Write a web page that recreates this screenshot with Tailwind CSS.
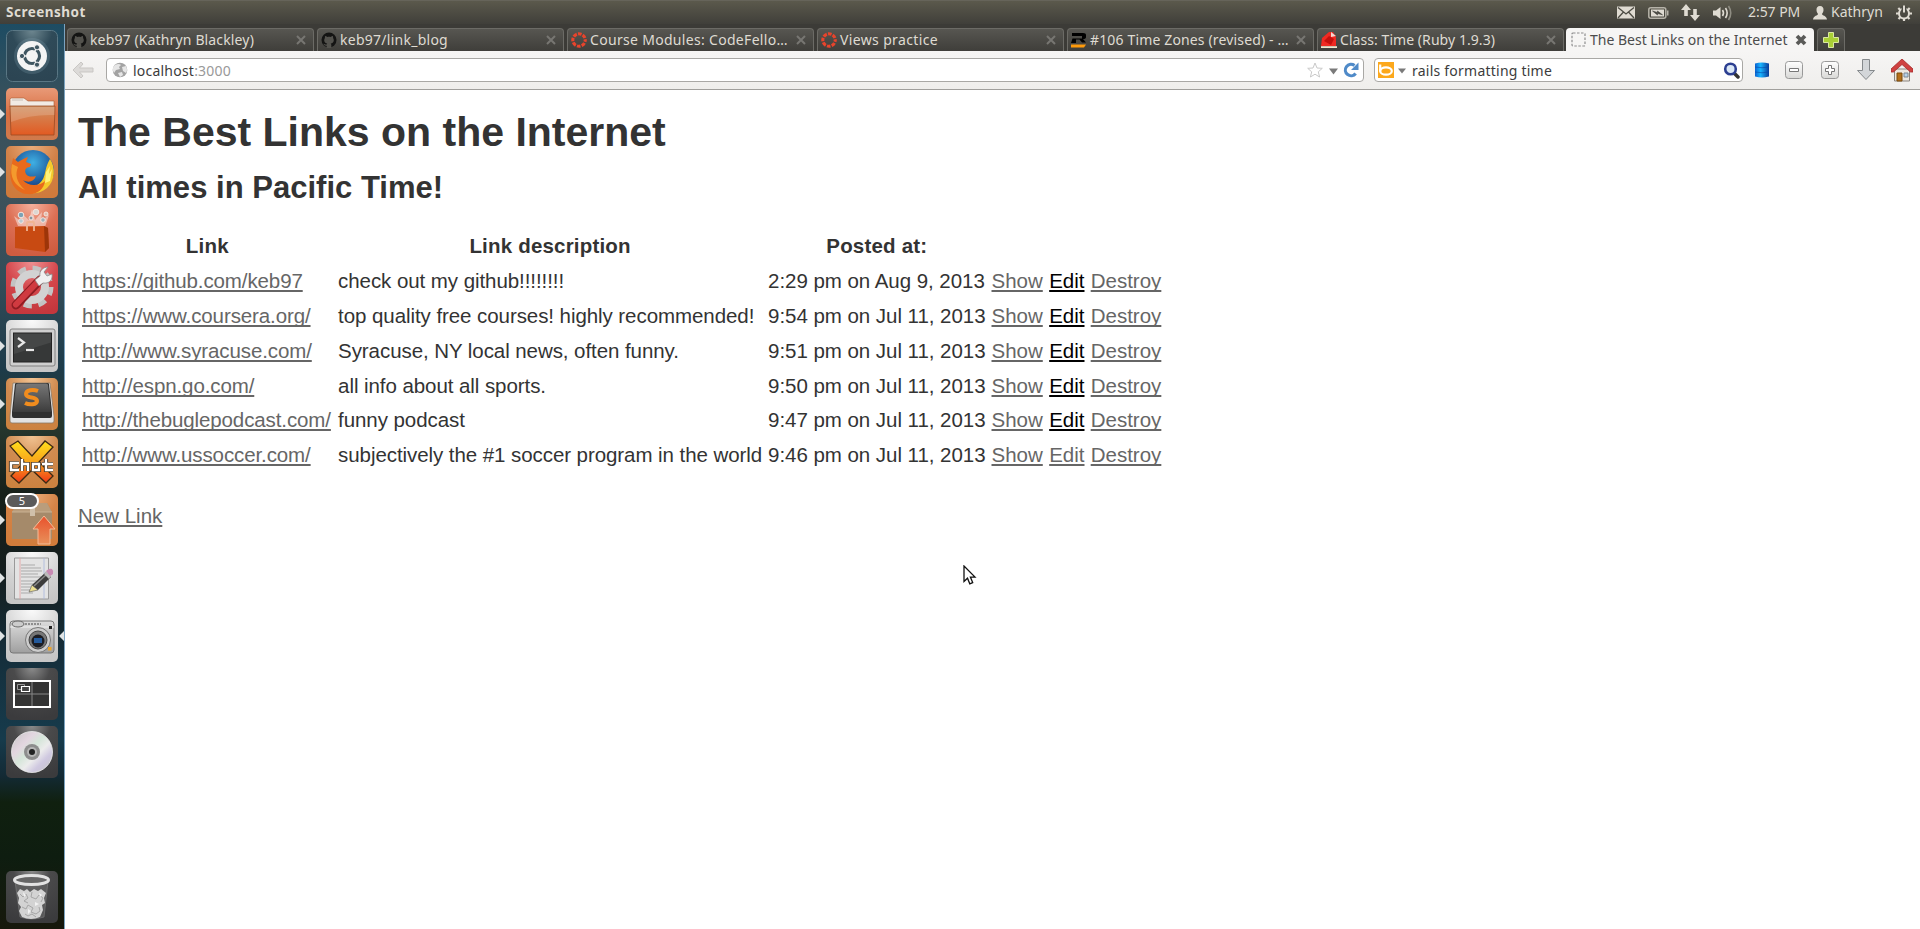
<!DOCTYPE html>
<html lang="en">
<head>
<meta charset="utf-8">
<title>The Best Links on the Internet</title>
<script src="https://cdn.jsdelivr.net/npm/@tailwindcss/browser@4"></script>
</head>
<body class="w-[1920px] h-[929px] overflow-hidden bg-white flex flex-col font-['Noto_Sans',sans-serif] text-[14px] leading-none">
<svg width="0" height="0" class="absolute">
<defs>
<linearGradient id="or" x1="0" y1="0" x2="0" y2="1"><stop offset="0" stop-color="#e89a78"/><stop offset=".5" stop-color="#d96f42"/><stop offset="1" stop-color="#cf7a4c"/></linearGradient>
<radialGradient id="tan" cx=".5" cy="0" r="1"><stop offset="0" stop-color="#f2c493"/><stop offset=".5" stop-color="#d08b50"/><stop offset="1" stop-color="#cc8240"/></radialGradient>
<radialGradient id="sal" cx=".5" cy="0" r="1"><stop offset="0" stop-color="#f4b09c"/><stop offset=".5" stop-color="#dc6f54"/><stop offset="1" stop-color="#cf5c40"/></radialGradient>
<radialGradient id="rd" cx=".5" cy="0" r="1"><stop offset="0" stop-color="#ee8f90"/><stop offset=".5" stop-color="#d4474c"/><stop offset="1" stop-color="#c4373d"/></radialGradient>
<radialGradient id="wh" cx=".5" cy="0" r="1"><stop offset="0" stop-color="#fafafa"/><stop offset=".6" stop-color="#d2d2d2"/><stop offset="1" stop-color="#c6c6c6"/></radialGradient>
<radialGradient id="dk" cx=".5" cy="0" r="1"><stop offset="0" stop-color="#8b8b8b"/><stop offset=".35" stop-color="#4a4a4b"/><stop offset="1" stop-color="#3b3b3d"/></radialGradient>
<radialGradient id="ub" cx=".5" cy="0" r="1"><stop offset="0" stop-color="#6e8790"/><stop offset=".4" stop-color="#2f4a58"/><stop offset="1" stop-color="#2c4553"/></radialGradient>
<linearGradient id="fold" x1="0" y1="0" x2="0" y2="1"><stop offset="0" stop-color="#cf9263"/><stop offset="1" stop-color="#e25a22"/></linearGradient>
<linearGradient id="xg" x1="0" y1="0" x2="0" y2="1"><stop offset="0" stop-color="#ffdf1c"/><stop offset=".5" stop-color="#f9a31c"/><stop offset="1" stop-color="#f03818"/></linearGradient>
<linearGradient id="key" x1="0" y1="0" x2="0" y2="1"><stop offset="0" stop-color="#777"/><stop offset="1" stop-color="#3c3c3c"/></linearGradient>
<linearGradient id="arr" x1="0" y1="0" x2="0" y2="1"><stop offset="0" stop-color="#e9512c"/><stop offset="1" stop-color="#e8905a"/></linearGradient>
<linearGradient id="disc" x1="0" y1="0" x2="1" y2="1"><stop offset="0" stop-color="#c4c4c4"/><stop offset=".3" stop-color="#e3d6e0"/><stop offset=".45" stop-color="#d6e6da"/><stop offset=".6" stop-color="#ececec"/><stop offset=".75" stop-color="#cfc8e0"/><stop offset="1" stop-color="#c4c4c4"/></linearGradient>
<linearGradient id="met" x1="0" y1="0" x2="0" y2="1"><stop offset="0" stop-color="#dcdcdc"/><stop offset="1" stop-color="#9f9f9f"/></linearGradient>
<linearGradient id="db" x1="0" y1="0" x2="1" y2="0"><stop offset="0" stop-color="#0b62d0"/><stop offset=".4" stop-color="#19b4ff"/><stop offset="1" stop-color="#0a3c9a"/></linearGradient>
<radialGradient id="ff" cx=".5" cy=".3" r=".6"><stop offset="0" stop-color="#3fb0e4"/><stop offset="1" stop-color="#153f86"/></radialGradient>
<linearGradient id="btn" x1="0" y1="0" x2="0" y2="1"><stop offset="0" stop-color="#fff"/><stop offset="1" stop-color="#d8d8d6"/></linearGradient>
<symbol id="tabx" viewBox="0 0 10 10"><path d="M1 1l8 8M9 1L1 9" stroke="#777672" stroke-width="2" fill="none"/></symbol>
<symbol id="gh" viewBox="0 0 17 17"><circle cx="8.5" cy="8.5" r="8" fill="#141413"/><path d="M6 17v-2.500c-2 .3-2.800-.6-3.400-2 1.200 0 1.500 1.200 3.500.8.100-.5.400-.8.600-1-2-.3-3.300-1.400-3.300-3.500 0-1 .3-1.700.8-2.300-.2-.8-.1-1.600.2-2.200.9 0 1.600.4 2.200.9 1.200-.3 2.600-.3 3.800 0 .6-.5 1.300-.9 2.200-.9.300.6.400 1.400.2 2.200.5.600.8 1.300.8 2.300 0 2.100-1.300 3.200-3.300 3.500.4.400.7 1 .7 1.700v3z" fill="#53524d"/></symbol>
<symbol id="canvas" viewBox="0 0 17 17"><circle cx="8.5" cy="8.5" r="6.6" fill="none" stroke="#e8442c" stroke-width="3.3" stroke-dasharray="3.9 1.284" stroke-dashoffset="1.9"/></symbol>
</defs>
</svg>

<!-- Top panel -->
<header class="h-6 w-full shrink-0 flex items-center bg-linear-to-b from-[#5b594c] to-[#403f3a] text-[#dfdbd2] border-t border-[#66645a]">
  <span class="ml-1.5 font-bold text-[13.5px] tracking-[0.5px]">Screenshot</span>
  <svg class="ml-auto" width="18" height="13" viewBox="0 0 18 13"><path d="M0 .5h18v12H0z" fill="#dfdbd2"/><path d="M1 1.5l8 6.5 8-6.5M1 12l5.5-6M17 12l-5.5-6" stroke="#4c4b43" stroke-width="1.3" fill="none"/></svg>
  <svg class="ml-[13px]" width="21" height="12" viewBox="0 0 21 12"><rect x=".8" y=".8" width="17" height="10.4" rx="2" fill="none" stroke="#b5b2a8" stroke-width="1.5"/><rect x="3" y="2.5" width="13" height="7" fill="#dfdbd2"/><path d="M19 3.5h1.500v5H19z" fill="#b5b2a8"/><path d="M4.500 4l5 1.500V4l5 3.800-5-1.300v1.500z" fill="#45443e" stroke="#45443e" stroke-width=".6"/></svg>
  <svg class="ml-3" width="19" height="17" viewBox="0 0 19 17"><path d="M5 0l5 6H6.800v6H3.200V6H0zM14 17l-5-6h3.200V5h3.600v6H19z" fill="#dfdbd2"/></svg>
  <svg class="ml-[13px]" width="20" height="16" viewBox="0 0 20 16"><path d="M0 5.500h3L7.500 2v12L3 10.500H0z" fill="#dfdbd2"/><path d="M9.500 5q2 3 0 6" stroke="#dfdbd2" stroke-width="1.6" fill="none"/><path d="M12.500 3q3.300 5 0 10" stroke="#dfdbd2" stroke-width="1.6" fill="none"/><path d="M15.500 1q4.500 7 0 14" stroke="#8f8d83" stroke-width="1.6" fill="none"/></svg>
  <span class="ml-[15px] w-[65px] tracking-[-0.05px] -mt-px">2:57 PM</span>
  <svg width="14" height="14" viewBox="0 0 14 14"><path d="M7 0c2.500 0 3.700 1.800 3.500 4.200-.1 1.800-1 3-1.500 3.700 0 1.500 4.600 1.600 5 5.600H0c.4-4 5-4.100 5-5.600-.5-.7-1.400-1.900-1.500-3.700C3.300 1.800 4.500 0 7 0z" fill="#dfdbd2"/></svg>
  <span class="ml-1 w-[65px] -mt-px">Kathryn</span>
  <svg class="mr-2" width="16" height="16" viewBox="0 0 16 16"><circle cx="8" cy="8.5" r="5" fill="none" stroke="#dfdbd2" stroke-width="2"/><path d="M8 13.500v2.500M2.800 8.500H0M13.200 8.500H16M4.500 12l-2 2M11.500 12l2 2M4.300 5l-2-2M11.700 5l2-2" stroke="#dfdbd2" stroke-width="2.2"/><path d="M8 1v6" stroke="#4b4a43" stroke-width="5"/><path d="M8 .5v7" stroke="#dfdbd2" stroke-width="2"/></svg>
</header>

<div class="flex flex-1 min-h-0">
<!-- Launcher -->
<aside class="relative w-[65px] h-[905px] shrink-0 border-r border-[#7ba3c0] bg-[linear-gradient(#1d4c63_0%,#34505d_7%,#3f525b_18%,#344d59_28%,#1d3b4a_38%,#27382f_44%,#17201a_52%,#141d1d_60%,#152f3c_70%,#163b4c_79%,#132a35_83%,#10200f_86%,#0e1d10_92%,#17180c_100%)] pt-1.5 flex flex-col">
 <div class="flex flex-col gap-1.5 items-start pl-1.5">
  <svg width="52" height="52" viewBox="0 0 52 52"><rect x=".5" y=".5" width="51" height="51" rx="6" fill="url(#ub)" stroke="#5a7784"/><circle cx="26" cy="26" r="18" fill="#9bc" opacity=".18"/><circle cx="26" cy="26" r="15" fill="#f4f4f4"/><circle cx="26" cy="26" r="7.5" fill="none" stroke="#3f5661" stroke-width="3.2"/><path d="M26 26L33.500 39M26 26L33.500 13M26 26L11 26" stroke="#f4f4f4" stroke-width="1.5"/><g fill="#3f5661" stroke="#f4f4f4"><circle cx="16" cy="26" r="2.6"/><circle cx="31" cy="17.3" r="2.6"/><circle cx="31" cy="34.7" r="2.6"/></g><circle cx="26" cy="26" r="5.5" fill="#f4f4f4"/></svg>
  <svg width="52" height="52" viewBox="0 0 52 52"><rect width="52" height="52" rx="5" fill="url(#or)"/><path d="M4 19v-8l1-1h13l4 3h26v6z" fill="#f1ebe4" stroke="#a85a33" stroke-width=".6"/><path d="M6 12h11" stroke="#c8bfb6"/><path d="M4 18h45l-1 29H5z" fill="url(#fold)" stroke="#9b4a22" stroke-width=".8"/><path d="M4.500 19h44v8Q25 26 5 34z" fill="#fff" opacity=".17"/></svg>
  <svg width="52" height="52" viewBox="0 0 52 52"><rect width="52" height="52" rx="5" fill="url(#tan)"/><rect width="52" height="52" rx="5" fill="#d9632f" opacity=".25"/><circle cx="27" cy="25" r="21" fill="url(#ff)"/><path d="M44 13c6 9 5 22-3 29-8 7-20 7-29 0 12 2 20-1 25-9 3-6 2-12 7-20z" fill="#f5c92c"/><path d="M46 23l-3 5 1-8-4 6-1 11 5-2z" fill="#fff27a"/><path d="M7 12l5 4c4-2 6-4 10-5l-2 5 5 2-1 3c-4 0-6 3-4 7 2 3 6 3 10 2-2 6-8 7-13 4 5 7 17 6 22 1-1 9-9 14-18 13C9 47 2 35 5 22z" fill="#e86a1c"/><path d="M6 18c-3 13 3 22 13 26C10 36 9 28 12 21z" fill="#f49a2d"/></svg>
  <svg width="52" height="52" viewBox="0 0 52 52"><rect width="52" height="52" rx="5" fill="url(#sal)"/><path d="M12 22L8 12l8 6-1-9 8 7 3-11 3 11 7-8-1 9 8-6-4 12z" fill="#fff" opacity=".45"/><g stroke="#f4e5df" stroke-width="1"><circle cx="15" cy="11" r="2.8" fill="#7ba2b5"/><circle cx="30" cy="8" r="2.8" fill="#dcd7d2"/><circle cx="40" cy="10" r="2" fill="#e0c0b0"/><circle cx="15" cy="17" r="2.3" fill="#b8cad2"/><circle cx="37" cy="16" r="2.3" fill="#9fb0b8"/><circle cx="25" cy="14" r="2" fill="#86959e"/></g><path d="M9 23l29-1 4 2 1 20-4 4-30-4z" fill="#c84a12"/><path d="M38 22l4 2 1 20-4 4z" fill="#9d3509"/><path d="M21 27v-8q0-1 1-1h5q1 0 1 1v8" fill="none" stroke="#f0b493" stroke-width="1.8"/></svg>
  <svg width="52" height="52" viewBox="0 0 52 52"><rect width="52" height="52" rx="5" fill="url(#rd)"/><circle cx="26" cy="25" r="18.5" fill="none" stroke="#c3c3c3" stroke-width="6" stroke-dasharray="8 6.530"/><circle cx="26" cy="25" r="13" fill="none" stroke="#d2d2d2" stroke-width="8"/><path d="M10 43L34 18" stroke="#8f1c22" stroke-width="9" stroke-linecap="round"/><path d="M10 42.500L33 18.500" stroke="#d03a40" stroke-width="6" stroke-linecap="round"/><path d="M29 18l5-4c-1-5 3-9 8-9l-4 5 3 4 5-2c1 6-3 10-9 9l-4 3z" fill="#f0f0f0" stroke="#8a8a8a" stroke-width=".8"/></svg>
  <svg width="52" height="52" viewBox="0 0 52 52"><rect width="52" height="52" rx="5" fill="url(#wh)"/><rect x="4" y="9" width="45" height="37" rx="2" fill="#cfcfcf" stroke="#808080"/><rect x="7.5" y="13" width="38" height="29" fill="#363838" stroke="#222"/><path d="M8 13.500h37v9L8 34z" fill="#fff" opacity=".08"/><path d="M12 18l6 4.500-6 4.500" stroke="#e8e8e8" stroke-width="2.2" fill="none"/><path d="M20 30h8" stroke="#e8e8e8" stroke-width="2.2"/></svg>
  <svg width="52" height="52" viewBox="0 0 52 52"><rect width="52" height="52" rx="5" fill="url(#tan)"/><path d="M4 38L7 5h37l4 33v5q0 2-2 2H6q-2 0-2-2z" fill="#e2e2e2" stroke="#8b7a66" stroke-width=".8"/><path d="M6 34L9 6q0-1 2-1h30q2 0 2 1l3 28v4q0 2-2 2H8q-2 0-2-2z" fill="#2f2f2f"/><path d="M7 34L10 7q0-1.500 2-1.500h28q2 0 2 1.500l3 27z" fill="url(#key)"/><path d="M32 13c-5-2-12-1-12 3 0 5 11 2 11 7 0 4-8 4-12 2" fill="none" stroke="#f08c1e" stroke-width="4"/></svg>
  <svg width="52" height="52" viewBox="0 0 52 52"><rect width="52" height="52" rx="5" fill="url(#tan)"/><path d="M4 10l8-5 14 15L39 5l8 6-14 15 14 14-7 7-14-13-13 13-8-7 13-14z" fill="url(#xg)" stroke="#3c2a14" stroke-width="1.3"/><g fill="none" stroke="#55402a" stroke-width="4.2"><path d="M13 27H5v7h8M16 23v12M16 28h6v7M27 28h6v6h-6zM40 23v11h7M36 28h11"/></g><g fill="none" stroke="#fff" stroke-width="2.3"><path d="M13 27H5v7h8M16 23v12M16 28h6v7M27 28h6v6h-6zM40 23v11h7M36 28h11"/></g></svg>
  <div class="relative w-[52px] h-[52px]">
   <svg width="52" height="52" viewBox="0 0 52 52"><rect width="52" height="52" rx="5" fill="url(#tan)"/><rect width="52" height="52" rx="5" fill="#df6d2a" opacity=".25"/><path d="M6 18l5-9h30l5 9v27H6z" fill="#a58a6a"/><path d="M6 18l5-9h30l5 9z" fill="#b99d7c"/><path d="M6 18h40" stroke="#c8b092"/><path d="M24 9h5v13h-5z" fill="#d0c0aa"/><path d="M32 50V35h-5l11-13 11 13h-5v15z" fill="url(#arr)" stroke="#f5bb96" stroke-width="1"/></svg>
   <div class="absolute -left-px -top-px w-[34px] h-4 rounded-full border-2 border-white bg-[#5b5b5b] text-white text-[11px] leading-[12px] text-center">5</div>
  </div>
  <svg width="52" height="52" viewBox="0 0 52 52"><rect width="52" height="52" rx="5" fill="url(#wh)"/><path d="M8.500 6h34v41h-34z" fill="#e3e3e3" stroke="#999"/><path d="M14 6v41" stroke="#e5a0a0" stroke-width=".8"/><path d="M38 6v41" stroke="#a8b6dd" stroke-width=".8"/><path d="M15 13h14M15 16h20M15 19h21M15 22h17M15 25h20M15 29h17M15 32h13M15 35h14M15 38h10M15 41h12" stroke="#a4a4a4" stroke-width=".9"/><path d="M23 40l3-7 6 5z" fill="#ecdf90" stroke="#555" stroke-width=".6"/><path d="M26 33l14-13 5 5-13 13z" fill="#3c3c3c"/><path d="M28 34l13-12" stroke="#888" stroke-width="1.5"/><path d="M38 22l2-3 5 5-2 3z" fill="#bbb"/><path d="M40 19q3-3 6-2 2 2 1 5l-3 2z" fill="#c98bb4"/></svg>
  <svg width="52" height="52" viewBox="0 0 52 52"><rect width="52" height="52" rx="5" fill="url(#wh)"/><rect x="4" y="11" width="44" height="32" rx="3" fill="url(#met)" stroke="#777"/><path d="M4 17h44" stroke="#eee"/><ellipse cx="12" cy="14" rx="6" ry="3" fill="#ccc" stroke="#666"/><path d="M19 14h16" stroke="#777" stroke-width="1.5" stroke-dasharray="2 1"/><rect x="43" y="16" width="3" height="3" fill="#222"/><circle cx="32" cy="30" r="12.5" fill="#ccc" stroke="#777"/><circle cx="32" cy="30" r="9" fill="#777" stroke="#444"/><circle cx="32" cy="31" r="6.5" fill="#1b1d24"/><path d="M28 28h8v5h-8z" fill="#245a9c"/><rect x="42" y="37" width="3.5" height="3.5" fill="#eca52c"/></svg>
  <svg width="52" height="52" viewBox="0 0 52 52"><rect width="52" height="52" rx="5" fill="url(#dk)"/><path d="M8 13h36v26H8z" fill="#333" stroke="#fff" stroke-width="2"/><path d="M26 14v24M9 26h34" stroke="#888"/><path d="M11.500 16.500h7v5h-7z" fill="none" stroke="#999"/><path d="M15.500 18.500h8v5h-8z" fill="#444" stroke="#fff" stroke-width="1.2"/></svg>
  <svg width="52" height="52" viewBox="0 0 52 52"><rect width="52" height="52" rx="5" fill="url(#dk)"/><circle cx="26" cy="26" r="20.5" fill="url(#disc)" stroke="#eee" stroke-width=".8"/><circle cx="26" cy="26" r="8" fill="#8d8d8d"/><circle cx="26" cy="26" r="5" fill="#b5b5b5"/><circle cx="26" cy="26" r="3" fill="#222"/></svg>
 </div>
 <svg class="mt-[93px] ml-1.5" width="52" height="52" viewBox="0 0 52 52"><rect width="52" height="52" rx="5" fill="url(#dk)"/><path d="M9 10h33l-4 36q-12 4-24 0z" fill="#767676" opacity=".45" stroke="#aaa" stroke-width=".8"/><path d="M11 22l3-4 4 2 3-2 3 3 4-3 4 2 3-2 5 4-2 5 1 5-3 2 1 5-3 7q-9 4-18 0l-3-6 2-4-3-4 1-5z" fill="#d3d3d3"/><path d="M14 23l3 3 3-3 2 4-4 3 4 2M26 21l-1 5 5 2 3-4 4 3-2 4M16 36l4 2 2-4 5 3-2 4 5 2 4-3-1-4M19 43l3 2 4-2 4 3" fill="none" stroke="#a6a6a6" stroke-width="1"/><path d="M17 21l3 3-2 2zM29 31l4 2-4 2zM22 38l3 2-3 3zM33 22l3 2-2 2z" fill="#f2f2f2"/><ellipse cx="25.5" cy="9" rx="17" ry="4.5" fill="#666" stroke="#e2e2e2" stroke-width="3"/></svg>
 <!-- running and focus markers -->
 <svg class="absolute left-0 top-0" width="64" height="905" viewBox="0 24 64 905" fill="#dfe3e4"><path d="M0 109l5 5-5 5zM0 167l5 5-5 5zM0 341l5 5-5 5zM0 399l5 5-5 5zM0 515l5 5-5 5zM0 573l5 5-5 5zM0 631l5 5-5 5zM64 631l-5 5 5 5z"/></svg>
</aside>

<main class="flex-1 min-w-0 flex flex-col">
 <!-- Tab strip -->
 <nav class="h-[27px] shrink-0 flex items-end bg-[#3c3b37] pl-0.5 gap-[3px] text-[#dfdbd2]">
  <div class="w-[247px] h-[23px] rounded-t-[4px] border-t border-x border-[#6c6b66] bg-linear-to-b from-[#575651] to-[#3f3e3a] flex items-center pl-[3px] pr-[7px]"><svg class="shrink-0" width="16" height="16"><use href="#gh"/></svg><span class="ml-[3px] whitespace-nowrap tracking-[0.14px]">keb97 (Kathryn Blackley)</span><svg class="ml-auto shrink-0" width="10" height="10"><use href="#tabx"/></svg></div>
  <div class="w-[247px] h-[23px] rounded-t-[4px] border-t border-x border-[#6c6b66] bg-linear-to-b from-[#575651] to-[#3f3e3a] flex items-center pl-[3px] pr-[7px]"><svg class="shrink-0" width="16" height="16"><use href="#gh"/></svg><span class="ml-[3px] whitespace-nowrap tracking-[0.26px]">keb97/link_blog</span><svg class="ml-auto shrink-0" width="10" height="10"><use href="#tabx"/></svg></div>
  <div class="w-[247px] h-[23px] rounded-t-[4px] border-t border-x border-[#6c6b66] bg-linear-to-b from-[#575651] to-[#3f3e3a] flex items-center pl-[3px] pr-[7px]"><svg class="shrink-0" width="16" height="16"><use href="#canvas"/></svg><span class="ml-[3px] whitespace-nowrap tracking-[0.31px]">Course Modules: CodeFello…</span><svg class="ml-auto shrink-0" width="10" height="10"><use href="#tabx"/></svg></div>
  <div class="w-[247px] h-[23px] rounded-t-[4px] border-t border-x border-[#6c6b66] bg-linear-to-b from-[#575651] to-[#3f3e3a] flex items-center pl-[3px] pr-[7px]"><svg class="shrink-0" width="16" height="16"><use href="#canvas"/></svg><span class="ml-[3px] whitespace-nowrap tracking-[0.36px]">Views practice</span><svg class="ml-auto shrink-0" width="10" height="10"><use href="#tabx"/></svg></div>
  <div class="w-[247px] h-[23px] rounded-t-[4px] border-t border-x border-[#6c6b66] bg-linear-to-b from-[#575651] to-[#3f3e3a] flex items-center pl-[3px] pr-[7px]"><svg class="shrink-0" width="16" height="16" viewBox="0 0 16 16"><path d="M1 1h11q3 0 3 2v2q0 2-3 2l3 3.500h-4L8.500 7.500H5V11H0l1.500-4.500H11V4H1z" fill="#000"/><path d="M0 12.500h15l-2 3H0z" fill="#ff9a0a"/></svg><span class="ml-[3px] whitespace-nowrap tracking-[0.15px]">#106 Time Zones (revised) - …</span><svg class="ml-auto shrink-0" width="10" height="10"><use href="#tabx"/></svg></div>
  <div class="w-[247px] h-[23px] rounded-t-[4px] border-t border-x border-[#6c6b66] bg-linear-to-b from-[#575651] to-[#3f3e3a] flex items-center pl-[3px] pr-[7px]"><svg class="shrink-0" width="16" height="16" viewBox="0 0 16 16"><path d="M1 6l7-6h4l3 5v9H0z" fill="#f02a22"/><path d="M3 9l5-5 5 3-3 6z" fill="#c4100d"/><path d="M10 0l5 4-5 1z" fill="#f5d8d2"/><path d="M0 14.200h16V16H0z" fill="#f2e6cf"/></svg><span class="ml-[3px] whitespace-nowrap tracking-[0.06px]">Class: Time (Ruby 1.9.3)</span><svg class="ml-auto shrink-0" width="10" height="10"><use href="#tabx"/></svg></div>
  <div class="w-[248px] h-[23px] rounded-t-[4px] bg-[#f6f5f4] text-[#4c4c4c] flex items-center pl-[5px] pr-[7px] -ml-px"><svg class="shrink-0" width="15" height="15" viewBox="0 0 15 15"><rect x="1" y="1" width="13" height="13" rx="1" fill="none" stroke="#8d8d8d" stroke-width="1.2" stroke-dasharray="2.5 1.5"/></svg><span class="ml-1 whitespace-nowrap">The Best Links on the Internet</span><svg class="ml-auto shrink-0" width="12" height="12" viewBox="0 0 12 12"><path d="M2 2l8 8M10 2l-8 8" stroke="#5a5a58" stroke-width="3.8"/></svg></div>
  <div class="w-7 h-[23px] rounded-t-[4px] border-t border-x border-[#6c6b66] bg-linear-to-b from-[#575651] to-[#3f3e3a] flex items-center justify-center"><svg width="16" height="16" viewBox="0 0 16 16"><path d="M5.500.5h5v5h5v5h-5v5h-5v-5h-5v-5h5z" fill="#a9cf36" stroke="#dbe8a0"/></svg></div>
 </nav>

 <!-- Navigation toolbar -->
 <div class="h-[39px] shrink-0 flex items-center bg-linear-to-b from-[#f6f5f4] to-[#efeeec] border-b border-[#a09f9c] text-[#3c3c3c] pl-[7px]">
  <svg width="22" height="18" viewBox="0 0 22 18"><path d="M9 1L1 9l8 8 2-2-3.500-4H21V7H7.500L11 3z" fill="#dcdad8" stroke="#c9c7c4"/></svg>
  <div class="ml-3 w-[1258px] h-6 rounded-[4px] border border-[#a9a8a5] bg-white flex items-center pl-[5px] pr-1">
   <svg width="16" height="16" viewBox="0 0 16 16"><circle cx="8" cy="8" r="7.3" fill="#a3a3a3"/><path d="M3 3q4-2 6 0l-2 2 1 2-4 1-2 3Q-1 6 3 3zM10 5l4-1q2 4 0 7l-3-2zM6 11l4-1 1 3-3 2z" fill="#e6e6e6"/></svg>
   <span class="ml-[5px] mt-px tracking-[0.22px]">localhost<span class="text-[#999]">:3000</span></span>
   <svg class="ml-auto" width="16" height="16" viewBox="0 0 16 16"><path d="M8 1l2 5 5.300.3-4 3.500 1.300 5.200L8 12.200 3.400 15l1.300-5.200-4-3.500L6 6z" fill="#fff" stroke="#c9c9c9"/></svg>
   <svg class="ml-1.5 mt-0.5" width="9" height="7" viewBox="0 0 9 7"><path d="M0 .5h9L4.500 6.500z" fill="#7a7a7a"/></svg>
   <svg class="ml-[5px]" width="16" height="16" viewBox="0 0 16 16"><path d="M12.600 11.500A5.700 5.700 0 1 1 11.500 3.500" fill="none" stroke="#4f8ac8" stroke-width="3.2"/><path d="M15.500.5v7.500H8z" fill="#4f8ac8"/></svg>
  </div>
  <div class="ml-2.5 w-[369px] h-6 rounded-[4px] border border-[#a9a8a5] bg-white flex items-center pl-[3px] pr-0.5">
   <svg width="16" height="16" viewBox="0 0 16 16"><path d="M0 0h16v16H0z" fill="#fca81c"/><path d="M2.200 2.500v7" stroke="#fff" stroke-width="2.2"/><ellipse cx="8" cy="9" rx="5.8" ry="3.7" fill="none" stroke="#fff" stroke-width="2.2"/></svg>
   <svg class="ml-1 mt-0.5" width="8" height="6" viewBox="0 0 8 6"><path d="M0 .5h8L4 5.500z" fill="#7a7a7a"/></svg>
   <span class="ml-1.5 mt-px tracking-[0.23px]">rails formatting time</span>
   <svg class="ml-auto" width="17" height="17" viewBox="0 0 17 17"><path d="M11 11l4 4" stroke="#333" stroke-width="3.5" stroke-linecap="round"/><circle cx="7.5" cy="7" r="5.3" fill="#dbe8f6" stroke="#2c3f91" stroke-width="2.6"/></svg>
  </div>
  <svg class="ml-3" width="14" height="16" viewBox="0 0 14 16"><path d="M0 1.500q7-2 14 0v13q-7 2-14 0z" fill="url(#db)"/><path d="M0 5q7 1.500 14 0M0 10q7 1.500 14 0" stroke="#0846a5" stroke-opacity=".6" fill="none"/></svg>
  <svg class="ml-4" width="18" height="18" viewBox="0 0 18 18"><rect x=".5" y=".5" width="17" height="17" rx="3" fill="url(#btn)" stroke="#999"/><path d="M4.500 7.500h9v3h-9z" fill="#fff" stroke="#777"/></svg>
  <svg class="ml-[18px]" width="18" height="18" viewBox="0 0 18 18"><rect x=".5" y=".5" width="17" height="17" rx="3" fill="url(#btn)" stroke="#999"/><path d="M7.500 4.500h3v3h3v3h-3v3h-3v-3h-3v-3h3z" fill="#fff" stroke="#777"/></svg>
  <svg class="ml-[18px]" width="18" height="22" viewBox="0 0 18 22"><path d="M5.500.5h7v11h5L9 20.500.5 11.500h5z" fill="#d3d6d9" stroke="#85898c"/></svg>
  <svg class="ml-4" width="22" height="23" viewBox="0 0 22 23"><path d="M3.500 10h15v12h-15z" fill="#eee8e0" stroke="#8a8580"/><path d="M6 14h5v8H6z" fill="#b5701a" stroke="#7b4a0c"/><path d="M13 14h4v4h-4z" fill="#b8d3ea" stroke="#7c8894"/><path d="M11 0L0 10v3h2.500L11 5.500l8.500 7.500H22v-3z" fill="#cf4140" stroke="#a52a2a" stroke-width=".8"/></svg>
 </div>

 <!-- Page -->
 <section class="flex-1 pl-[13px] font-['Liberation_Sans',Arial,sans-serif] text-[20.5px] leading-[28.4px] text-[#333]">
  <h1 class="mt-[26px] text-[41px] font-bold leading-[32px]">The Best Links on the Internet</h1>
  <h2 class="mt-[26px] text-[31.05px] font-bold leading-[28.4px]">All times in Pacific Time!</h2>
  <table class="mt-[25.4px] border-separate border-spacing-[3px] whitespace-nowrap [&_td]:px-[1.5px] [&_td]:py-[1.6px] [&_th]:py-[1.6px] [&_th]:tracking-[0.19px] [&_td]:leading-[28.65px] [&_td:nth-child(1)]:tracking-[-0.11px] [&_td:nth-child(1)]:pl-[1px] [&_td:nth-child(1)]:pr-[2.7px] [&_td:nth-child(2)]:tracking-[-0.07px] [&_td:nth-child(3)]:tracking-[-0.045px] [&_td:nth-child(5)]:pl-[1.9px] [&_td:nth-child(5)]:pr-[1.7px] [&_a]:text-[#666] [&_a]:underline [&_a]:decoration-2 [&_a]:underline-offset-[2px] [&_a]:[text-decoration-skip-ink:none] [&_a.hot]:text-black">
   <thead><tr><th>Link</th><th>Link description</th><th>Posted at:</th><th></th><th></th><th></th></tr></thead>
   <tbody>
   <tr><td><a>https://github.com/keb97</a></td><td>check out my github!!!!!!!!</td><td>2:29 pm on Aug 9, 2013</td><td><a>Show</a></td><td><a class="hot">Edit</a></td><td><a>Destroy</a></td></tr>
   <tr><td><a>https://www.coursera.org/</a></td><td>top quality free courses! highly recommended!</td><td>9:54 pm on Jul 11, 2013</td><td><a>Show</a></td><td><a class="hot">Edit</a></td><td><a>Destroy</a></td></tr>
   <tr><td><a>http://www.syracuse.com/</a></td><td>Syracuse, NY local news, often funny.</td><td>9:51 pm on Jul 11, 2013</td><td><a>Show</a></td><td><a class="hot">Edit</a></td><td><a>Destroy</a></td></tr>
   <tr><td><a>http://espn.go.com/</a></td><td>all info about all sports.</td><td>9:50 pm on Jul 11, 2013</td><td><a>Show</a></td><td><a class="hot">Edit</a></td><td><a>Destroy</a></td></tr>
   <tr><td><a>http://thebuglepodcast.com/</a></td><td>funny podcast</td><td>9:47 pm on Jul 11, 2013</td><td><a>Show</a></td><td><a class="hot">Edit</a></td><td><a>Destroy</a></td></tr>
   <tr><td><a>http://www.ussoccer.com/</a></td><td>subjectively the #1 soccer program in the world</td><td>9:46 pm on Jul 11, 2013</td><td><a>Show</a></td><td><a>Edit</a></td><td><a>Destroy</a></td></tr>
   </tbody>
  </table>
  <p class="mt-[27.6px]"><a class="text-[#666] underline decoration-2 underline-offset-[2px]">New Link</a></p>
 </section>
</main>
</div>
<!-- Mouse pointer -->
<svg class="absolute left-[963px] top-[565px]" width="14" height="21" viewBox="0 0 14 21"><path d="M1 1v15.500l3.500-3.300 2.300 5.600 2.900-1.200-2.300-5.500H12z" fill="#fff" stroke="#111" stroke-width="1.3"/></svg>
</body>
</html>
